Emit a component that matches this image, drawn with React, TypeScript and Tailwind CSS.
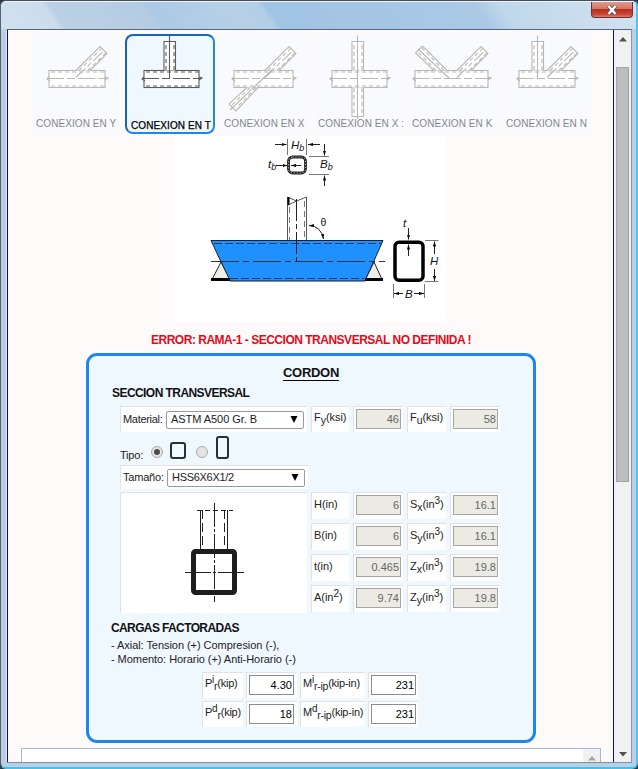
import React from "react";

type Kind = "Y" | "T" | "X" | "X2" | "K" | "N";

function Tube({ outline, inner }: { outline: string; inner: string }) {
  return (
    <>
      <path d={outline} fill="#fff" />
      <path d={inner} strokeDasharray="4 3" />
    </>
  );
}

function Chord({ a, b }: { a: number; b: number }) {
  return (
    <>
      <rect x={a} y={36.5} width={b - a} height={17} fill="#fff" />
      <path d={`M${a + 2} 38H${b}M${a + 2} 52H${b}`} strokeDasharray="4 3" />
      <path d={`M${a - 2} 44.5H${b + 3}`} strokeDasharray="17 3 8 3" />
      <path d={`M${a} 43l-2 2 3 2M${b} 43l3 1-3 2`} />
    </>
  );
}

function DiagRight({ x }: { x: number }) {
  return (
    <>
      <path d={`M${x} 36.5l24-24 7 7-17 17`} fill="#fff" />
      <path d={`M${x + 3} 36.5L${x + 26} 14M${x + 12} 36.5L${x + 30} 19`} strokeDasharray="4 3" />
      <path d={`M${x} 43.5l28-27`} strokeDasharray="13 3 5 3" />
    </>
  );
}

function Joint({ kind }: { kind: Kind }) {
  return (
    <svg width="90" height="90" viewBox="0 0 90 90" fill="none" stroke={kind === "T" ? "#5c5c5c" : "#b8b8b5"} strokeWidth="1.1">
      {kind === "Y" && <><Chord a={18} b={74} /><DiagRight x={45} /></>}
      {kind === "T" && (
        <>
          <Chord a={19} b={74} />
          <Tube outline="M39 36.5V7.500H50.500V36.500" inner="M41 36V9M49 36V9" />
          <path d="M44.500 1.500V44" />
        </>
      )}
      {kind === "X" && (
        <>
          <Chord a={15} b={74} />
          <DiagRight x={46} />
          <path d="M28 53.500L10 70l7 7 22-23.500" fill="#fff" />
          <path d="M31 53.500L13 71M37 53.500L17 74" strokeDasharray="4 3" />
          <path d="M11 76l43-41" />
        </>
      )}
      {kind === "X2" && (
        <>
          <Chord a={19} b={74} />
          <Tube outline="M39 36.500V7.500H50.500V36.500" inner="M41 36V9M49 36V9" />
          <Tube outline="M39 53.500V82.500H50.500V53.500" inner="M41 54V82M49 54V82" />
          <path d="M44.500 1.500V85" />
        </>
      )}
      {kind === "K" && (
        <>
          <Chord a={8} b={81} />
          <DiagRight x={50} />
          <path d="M27 36.500L8.500 19l7-7L40 36.500" fill="#fff" />
          <path d="M29 36.500L11 18M37 36.500L15 14" strokeDasharray="4 3" />
          <path d="M11 15l31 29" />
        </>
      )}
      {kind === "N" && (
        <>
          <Chord a={18} b={74} />
          <Tube outline="M31 36.500V7.500H42.500V36.500" inner="M33 36V9M41 36V9" />
          <path d="M36.500 1.500V44" />
          <DiagRight x={46} />
        </>
      )}
    </svg>
  );
}

function JointCard({ kind, label }: { kind: Kind; label: string }) {
  const selected = kind === "T";
  return (
    <div
      className={
        selected
          ? "h-[100px] w-[90px] rounded-[8px] border-2 border-t-[#1566b3] border-r-[#1e87ee] border-b-[#1e87ee] border-l-[#1566b3] bg-[#f0f8ff]"
          : "h-[100px] w-[90px] bg-[#f9fafd]"
      }
    >
      <div className={selected ? "-mt-0.5 -ml-0.5 h-[86px] w-[90px]" : "h-[84px] w-[90px]"}>
        <Joint kind={kind} />
      </div>
      <div
        className={
          selected
            ? "pl-1 text-[10px] leading-[12px] tracking-[0.1px] whitespace-nowrap text-black [-webkit-text-stroke:0.25px_black]"
            : "pl-[5px] text-[10px] leading-[12px] tracking-[0.08px] whitespace-nowrap text-[#85868b]"
        }
      >
        {label}
      </div>
    </div>
  );
}

function MainDiagram() {
  return (
    <svg width="274" height="186" viewBox="173 136 274 186" className="ml-[165px] block bg-white" fill="none" stroke="#222" strokeWidth="1">
      <defs>
        <marker id="arrow" viewBox="0 0 6 4" refX="6" refY="2" markerWidth="5" markerHeight="3.5" orient="auto-start-reverse" markerUnits="userSpaceOnUse">
          <path d="M0 0L6 2L0 4Z" fill="#111" stroke="none" />
        </marker>
      </defs>
      <path d="M287.500 139V155M306.500 139V155M309 156.500H329M309 174.500H329" stroke="#777" />
      <path d="M275 144.500H286.500" markerEnd="url(#arrow)" />
      <path d="M320 144.500H308" markerEnd="url(#arrow)" />
      <path d="M324.500 144V155.500" markerEnd="url(#arrow)" />
      <path d="M324.500 186V175.500" markerEnd="url(#arrow)" />
      <rect x="288.500" y="157" width="17" height="16" rx="4" stroke="#222" strokeWidth="2.800" />
      <rect x="288.500" y="157" width="17" height="16" rx="4" stroke="#ddd" strokeWidth="1" strokeDasharray="1 2" />
      <path d="M276 165.500H287.500" markerEnd="url(#arrow)" />
      <path d="M301 165.500H291" markerEnd="url(#arrow)" />
      <path d="M287.500 240V197L296.500 201L306.500 197V240M288 205L296.500 201" stroke="#555" />
      <path d="M288.500 197V205" stroke="#000" strokeWidth="2" />
      <path d="M289.500 207V240M304.500 201V240" stroke="#777" strokeDasharray="6 4" />
      <path d="M211 240.500H383L365 281H230Z" fill="#1e90ff" stroke="#123" />
      <path d="M214 243.500H381M230 278.500H364" strokeDasharray="8 3" stroke="#073763" />
      <path d="M221 262L211.500 280.500H230ZM374 262L365 280.500H382.500Z" fill="#eeeee8" />
      <path d="M211 279.500H230M365 279.500H383" stroke="#000" strokeWidth="3" />
      <path d="M211 261.500H385" stroke="#333" strokeDasharray="28 4 6 4" />
      <path d="M296.500 199V262" strokeDasharray="22 3 5 3" />
      <path d="M309 225.500Q321 226 323.500 239" markerStart="url(#arrow)" markerEnd="url(#arrow)" />
      <rect x="395" y="242.200" width="28" height="38" rx="4" stroke="#000" strokeWidth="3.500" fill="#fff" />
      <path d="M408.500 228V239.500" markerEnd="url(#arrow)" />
      <path d="M408.500 256V244.500" markerEnd="url(#arrow)" />
      <path d="M425 240.500H438.500M425 281.500H438.500M393.500 284V298M424.500 284V298" stroke="#777" />
      <path d="M434.500 254V241.500" markerEnd="url(#arrow)" />
      <path d="M434.500 269V281" markerEnd="url(#arrow)" />
      <path d="M403 293.500H394" markerEnd="url(#arrow)" />
      <path d="M414 293.500H424" markerEnd="url(#arrow)" />
      <g fill="#111" stroke="none" fontStyle="italic" fontSize="11.5">
        <text x="291" y="149">H<tspan fontSize="9" dy="2">b</tspan></text>
        <text x="320" y="168">B<tspan fontSize="9" dy="2">b</tspan></text>
        <text x="268" y="168">t<tspan fontSize="9" dy="2">b</tspan></text>
        <text x="403" y="227">t</text>
        <text x="430" y="265">H</text>
        <text x="405" y="298">B</text>
        <text x="320.500" y="226" fontStyle="normal" fontSize="10.5">θ</text>
      </g>
    </svg>
  );
}

function SectionDrawing() {
  return (
    <svg width="186" height="120" viewBox="121 493 186 120" fill="none" stroke="#222" strokeWidth="1">
      <path d="M197 510.500H233" strokeDasharray="5 3" />
      <path d="M200.500 510V549M227.500 510V549" />
      <path d="M202.500 510V549M224.500 510V549" strokeDasharray="9 4" />
      <rect x="193.500" y="551.500" width="41" height="41" rx="2" strokeWidth="5" stroke="#1e1e1e" />
      <path d="M214.500 503V602" strokeDasharray="24 2 3 2" />
      <path d="M185 572.500H244" strokeDasharray="26 2 3 2" />
    </svg>
  );
}

const cell = "border-t border-l border-[#dfe3e6] bg-white";

function Label({ children }: { children: React.ReactNode }) {
  return <div className={`${cell} flex items-center pl-0.5 pb-1 whitespace-nowrap`}><span>{children}</span></div>;
}

function Sub({ children }: { children: React.ReactNode }) {
  return <span className="relative top-[3px] text-[10.5px]">{children}</span>;
}

function Sup({ children }: { children: React.ReactNode }) {
  return <span className="relative -top-1 text-[10px]">{children}</span>;
}

function Field({ value, editable = false }: { value: string; editable?: boolean }) {
  return (
    <div className={`${cell} pt-0.5 pl-0.5`}>
      <input
        readOnly
        value={value}
        className={
          editable
            ? "block h-5 w-[45px] border border-[#8c8c8c] bg-white pr-px text-right text-[11px] tracking-normal text-black outline-none"
            : "block h-5 w-[45px] border border-[#a6a6a6] bg-[#ebebe4] pr-px text-right text-[11px] tracking-normal text-[#666] outline-none"
        }
      />
    </div>
  );
}

function Select({ children }: { children: React.ReactNode }) {
  return (
    <div className="flex h-[18px] w-[138px] items-center justify-between rounded-[2px] border border-[#9a9a9a] bg-white pr-[5px] pl-1">
      {children}
      <svg width="8" height="7" viewBox="0 0 8 7"><path d="M0.500 0H7.500L4 7Z" fill="#000" /></svg>
    </div>
  );
}

function Radio({ on }: { on?: boolean }) {
  return (
    <span className="flex h-3 w-3 items-center justify-center rounded-full border border-[#aaa] bg-[#e4e4e4]">
      {on && <span className="h-1.5 w-1.5 rounded-full bg-[#4c4c4c]" />}
    </span>
  );
}

function CordonPanel() {
  return (
    <section className="ml-[78px] h-[390px] w-[450px] rounded-[11px] border-3 border-[#1e87ee] bg-[#f0f8ff] text-[11px] leading-[13px] tracking-[-0.05px] text-[#222]">
      <h1 className="pt-[9px] text-center text-[13px] leading-[15px] font-bold tracking-[-0.3px] text-[#111]">
        <span className="border-b border-black">CORDON</span>
      </h1>
      <h2 className="pt-[5px] pl-[23px] text-[12px] leading-[16px] font-bold tracking-[-0.56px] text-[#111]">SECCION TRANSVERSAL</h2>

      <div className="mt-[5px] ml-[31px] grid h-[26px] grid-cols-[187px_38px_50px_39px_50px] gap-x-1">
        <div className={`${cell} flex items-center gap-[3px] pl-0.5`}>
          <span className="w-10 tracking-[-0.3px]">Material:</span>
          <Select><span>ASTM A500 Gr. B</span></Select>
        </div>
        <Label>F<Sub>y</Sub>(ksi)</Label>
        <Field value="46" />
        <Label>F<Sub>u</Sub>(ksi)</Label>
        <Field value="58" />
      </div>

      <div className="ml-[31px] flex h-[33px] items-end pb-[3px]">
        <span className="w-[31px] tracking-[-0.2px]">Tipo:</span>
        <span className="mb-1"><Radio on /></span>
        <span className="mb-[3px] ml-[7px] h-[17px] w-4 rounded-[3px] border-2 border-[#263038]" />
        <span className="mb-1 ml-[10px]"><Radio /></span>
        <span className="mb-[3px] ml-2 h-[23px] w-[13px] rounded-[3px] border-2 border-[#263038]" />
      </div>

      <div className={`${cell} ml-[31px] flex h-6 w-[188px] items-center gap-[3px] pl-0.5`}>
        <span className="w-[41px] tracking-[-0.2px]">Tamaño:</span>
        <Select><span className="tracking-[-0.3px]">HSS6X6X1/2</span></Select>
      </div>

      <div className="mt-[3px] ml-[31px] grid h-[121px] grid-cols-[187px_38px_50px_39px_50px] grid-rows-[repeat(4,27px)] gap-x-1 gap-y-1">
        <div className={`${cell} row-span-4 h-[121px]`}><SectionDrawing /></div>
        <Label>H(in)</Label><Field value="6" /><Label>S<Sub>x</Sub>(in<Sup>3</Sup>)</Label><Field value="16.1" />
        <Label>B(in)</Label><Field value="6" /><Label>S<Sub>y</Sub>(in<Sup>3</Sup>)</Label><Field value="16.1" />
        <Label>t(in)</Label><Field value="0.465" /><Label>Z<Sub>x</Sub>(in<Sup>3</Sup>)</Label><Field value="19.8" />
        <Label>A(in<Sup>2</Sup>)</Label><Field value="9.74" /><Label>Z<Sub>y</Sub>(in<Sup>3</Sup>)</Label><Field value="19.8" />
      </div>

      <h2 className="mt-[7px] pl-[22px] text-[12px] leading-[16px] font-bold tracking-[-0.62px] text-[#111]">CARGAS FACTORADAS</h2>
      <p className="mt-0.5 pl-[22px] leading-[14px]">- Axial: Tension (+) Compresion (-),<br />- Momento: Horario (+) Anti-Horario (-)</p>

      <div className="mt-[6px] ml-[113px] grid grid-cols-[41px_51px_65px_50px] grid-rows-[26px_26px] gap-[3px] tracking-[-0.24px]">
        <Label>P<Sup>i</Sup><Sub>r</Sub>(kip)</Label><Field editable value="4.30" />
        <Label>M<Sup>i</Sup><Sub>r-ip</Sub>(kip-in)</Label><Field editable value="231" />
        <Label>P<Sup>d</Sup><Sub>r</Sub>(kip)</Label><Field editable value="18" />
        <Label>M<Sup>d</Sup><Sub>r-ip</Sub>(kip-in)</Label><Field editable value="231" />
      </div>
    </section>
  );
}

export default function App() {
  return (
    <div className="flex h-[769px] w-[638px] flex-col overflow-hidden bg-[#263b49] font-['Liberation_Sans',Arial,sans-serif]">
      <div className="flex h-[769px] w-[638px] flex-col overflow-hidden rounded-[6px] border-t border-r-2 border-b-2 border-l border-t-[#444c58] border-r-[#48c8f0] border-b-[#48c0e3] border-l-[#56636b] bg-[#b8cfe5]">
        <header className="flex h-7 shrink-0 justify-end border-t border-[#eef5fc] bg-[linear-gradient(55deg,#d0e0ef_0%,#cbddec_9%,#bad0e5_10%,#b4cce2_24%,#accae5_25%,#b7d0e6_38%,#b3cee6_42%,#a0c4e4_43%,#a9c9e6_75%,#c0d8ec_79%,#d2e2ef_100%)] pr-[3px]">
          <button className="flex h-4 w-[42px] items-center justify-center rounded-b-[4px] border border-t-0 border-[#65333a] bg-[linear-gradient(#df9a8e_0%,#d27766_45%,#b63220_50%,#c84332_80%,#e77863_100%)]">
            <svg width="12" height="10" viewBox="0 0 12 10" fill="none">
              <path d="M2.500 1L9.500 9M9.500 1L2.500 9" stroke="#604b57" strokeWidth="4" />
              <path d="M2.500 1L9.500 9M9.500 1L2.500 9" stroke="#fff" strokeWidth="2.400" />
            </svg>
          </button>
        </header>
        <div className="ml-[5px] flex h-[734px] w-[626px] shrink-0 border-t border-b border-l border-r border-t-[#55677b] border-r-[#8499ad] border-b-[#7c91a5] border-l-[#e0ecf5] bg-[#f1f1f3]">
          <main className="h-[732px] w-[607px] overflow-hidden border-r border-l border-r-[#0a0aa8] border-l-[#140a78] bg-[#fffafa]">
            <div className="flex h-[104px] gap-1 pt-1 pl-[23px]">
              <JointCard kind="Y" label="CONEXION EN Y" />
              <JointCard kind="T" label="CONEXION EN T" />
              <JointCard kind="X" label="CONEXION EN X" />
              <JointCard kind="X2" label="CONEXION EN X :" />
              <JointCard kind="K" label="CONEXION EN K" />
              <JointCard kind="N" label="CONEXION EN N" />
            </div>
            <div className="pt-0.5"><MainDiagram /></div>
            <p className="mt-[10px] h-[21px] pl-[143px] text-[12px] leading-[16px] font-bold tracking-[-0.49px] whitespace-nowrap text-[#df0b20]">
              ERROR: RAMA-1 - SECCION TRANSVERSAL NO DEFINIDA !
            </p>
            <CordonPanel />
            <div className="mt-[5px] ml-[13px] flex h-[30px] w-[580px] justify-end border border-[#a4b8d2] bg-white">
              <div className="flex h-[29px] w-[17px] justify-center bg-[#f1f1f1] pt-[7px]">
                <svg width="8" height="5" viewBox="0 0 8 5"><path d="M0 4.500L4 0L8 4.500Z" fill="#a3a3a3" /></svg>
              </div>
            </div>
          </main>
          <aside className="flex w-[17px] flex-col items-center">
            <svg width="8" height="5" viewBox="0 0 8 5" className="mt-[7px]"><path d="M0 4.500L4 0L8 4.500Z" fill="#505050" /></svg>
            <div className="mt-[25px] h-[415px] w-[13px] border border-[#a3a3a3] bg-[#bdbdbf]" />
            <svg width="8" height="5" viewBox="0 0 8 5" className="mt-[270px]"><path d="M0 0L4 4.500L8 0Z" fill="#505050" /></svg>
          </aside>
        </div>
      </div>
    </div>
  );
}
